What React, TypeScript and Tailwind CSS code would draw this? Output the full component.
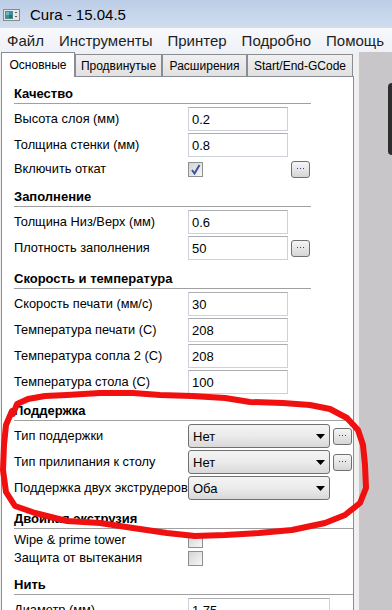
import React from "react";

function TitleBar() {
  return (
    <div className="flex h-[28px] shrink-0 items-center bg-gradient-to-b from-[#bccde6] to-[#d0ddef] pl-[3px]">
      <svg width="17" height="12" viewBox="0 0 17 12" className="mt-[1px]">
        <rect x="0.5" y="0.5" width="16" height="11" fill="#e6e6e6" stroke="#8a8a8a" />
        <rect x="2" y="2" width="8" height="8" fill="#3f8f9a" />
        <rect x="3" y="3" width="3" height="3" fill="#6cb7c9" />
        <rect x="6" y="6" width="3" height="3" fill="#2f6f5a" />
        <rect x="12" y="3" width="2" height="1" fill="#555" />
        <rect x="12" y="7" width="2" height="1" fill="#555" />
      </svg>
      <span className="ml-[10px] text-[15px] leading-none text-black">Cura - 15.04.5</span>
    </div>
  );
}

function MenuBar() {
  const items = ["Файл", "Инструменты", "Принтер", "Подробно", "Помощь"];
  return (
    <div className="flex h-[24px] shrink-0 items-center gap-[15px] whitespace-nowrap bg-gradient-to-b from-[#f7f9fc] to-[#eef1f6] pl-[7px] text-[15px] leading-none text-[#1e1e1e]">
      {items.map((m) => (
        <span key={m}>{m}</span>
      ))}
    </div>
  );
}

function Tabs() {
  const rest = [
    { t: "Продвинутые", w: "w-[87px]" },
    { t: "Расширения", w: "w-[85px]" },
    { t: "Start/End-GCode", w: "w-[106px]" },
  ];
  return (
    <div className="relative z-10 flex h-[24px] shrink-0 items-end text-[12px] leading-none text-black">
      <div className="mb-[-1px] flex h-[25px] w-[74px] items-center justify-center border-x border-t border-[#898c95] bg-white pb-[1px]">
        Основные
      </div>
      {rest.map((r) => (
        <div
          key={r.t}
          className={`flex h-[22px] ${r.w} items-center justify-center border-x border-t border-[#898c95] bg-gradient-to-b from-[#f0f0f0] to-[#e1e1e1]`}
        >
          {r.t}
        </div>
      ))}
    </div>
  );
}

function DotsButton() {
  return (
    <div className="ml-[3px] flex h-[17px] w-[19px] items-center justify-center rounded-[3px] border border-[#707070] bg-gradient-to-b from-[#f5f5f5] to-[#d6d6d6]">
      <svg width="7" height="2" viewBox="0 0 7 2">
        <rect x="0" y="0" width="1" height="1" fill="#2247a8" />
        <rect x="3" y="0" width="1" height="1" fill="#2247a8" />
        <rect x="6" y="0" width="1" height="1" fill="#2247a8" />
      </svg>
    </div>
  );
}

function CheckBox({ checked }: { checked?: boolean }) {
  return (
    <div className="flex h-[15px] w-[15px] items-center justify-center border border-[#8e8f8f] bg-gradient-to-br from-[#d4d4d4] to-[#f7f7f7]">
      {checked && (
        <svg width="11" height="11" viewBox="0 0 11 11">
          <path d="M2 6 L4.5 9.5 L9.5 1" fill="none" stroke="#3a559c" strokeWidth="2" />
        </svg>
      )}
    </div>
  );
}

function Input({ value, wide }: { value: string; wide?: boolean }) {
  return (
    <div
      className={`flex h-[24px] ${wide ? "w-[142px]" : "w-[100px]"} items-center border border-[#cdd2da] border-t-[#abadb3] bg-white pl-[3px] text-[13px] leading-none text-black`}
    >
      {value}
    </div>
  );
}

function Select({ value }: { value: string }) {
  return (
    <div className="flex h-[24px] w-[142px] items-center justify-between rounded-[3px] border border-[#707070] bg-gradient-to-b from-[#f4f4f4] via-[#ebebeb] to-[#d9d9d9] pl-[4px] pr-[4px] text-[13px] leading-none text-black">
      <span>{value}</span>
      <svg width="9" height="5" viewBox="0 0 9 5">
        <path d="M0 0 H9 L4.5 5 Z" fill="#000" />
      </svg>
    </div>
  );
}

function Row({ label, children, h = "h-[26px]" }: { label: string; children?: React.ReactNode; h?: string }) {
  return (
    <div className={`flex ${h} items-center`}>
      <div className="w-[174px] whitespace-nowrap text-[12.8px] leading-none text-black">{label}</div>
      {children}
    </div>
  );
}

function Section({
  title,
  wide,
  mt,
  children,
}: {
  title: string;
  wide?: boolean;
  mt: string;
  children: React.ReactNode;
}) {
  return (
    <div className={mt}>
      <div className="h-4 text-[13px] font-bold leading-4 text-black">{title}</div>
      <div className={`mt-px h-px bg-[#a0a0a0] ${wide ? "w-[339px]" : "w-[297px]"}`} />
      <div className="mt-[2px]">{children}</div>
    </div>
  );
}

function Panel() {
  return (
    <div className="flex-1 border-x border-t border-[#898c95] bg-white pl-[12px] pt-[9px]">
      <Section title="Качество" mt="mt-0">
        <Row label="Высота слоя (мм)">
          <Input value="0.2" />
        </Row>
        <Row label="Толщина стенки (мм)">
          <Input value="0.8" />
        </Row>
        <Row label="Включить откат" h="h-[22px]">
          <div className="w-[100px]">
            <CheckBox checked />
          </div>
          <DotsButton />
        </Row>
      </Section>
      <Section title="Заполнение" mt="mt-[9px]">
        <Row label="Толщина Низ/Верх (мм)">
          <Input value="0.6" />
        </Row>
        <Row label="Плотность заполнения">
          <Input value="50" />
          <DotsButton />
        </Row>
      </Section>
      <Section title="Скорость и температура" mt="mt-[10px]">
        <Row label="Скорость печати (мм/с)">
          <Input value="30" />
        </Row>
        <Row label="Температура печати (C)">
          <Input value="208" />
        </Row>
        <Row label="Температура сопла 2 (C)">
          <Input value="208" />
        </Row>
        <Row label="Температура стола (C)">
          <Input value="100" />
        </Row>
      </Section>
      <Section title="Поддержка" mt="mt-[8px]" wide>
        <Row label="Тип поддержки">
          <Select value="Нет" />
          <DotsButton />
        </Row>
        <Row label="Тип прилипания к столу">
          <Select value="Нет" />
          <DotsButton />
        </Row>
        <Row label="Поддержка двух экструдеров">
          <Select value="Оба" />
        </Row>
      </Section>
      <Section title="Двойная экструзия" mt="mt-[10px]" wide>
        <Row label="Wipe & prime tower" h="h-[18px]">
          <CheckBox />
        </Row>
        <Row label="Защита от вытекания" h="h-[18px]">
          <CheckBox />
        </Row>
      </Section>
      <Section title="Нить" mt="mt-[10px]" wide>
        <Row label="Диаметр (мм)">
          <Input value="1.75" wide />
        </Row>
      </Section>
    </div>
  );
}

const loop = [
  [13, 414], [17, 404], [28, 399], [45, 396], [67, 395], [100, 393], [133, 393], [160, 395],
  [192, 396], [225, 398], [250, 402], [283, 403], [310, 405], [330, 409], [347, 418], [358, 430],
  [363, 445], [365, 465], [366, 488], [360, 503], [345, 515], [325, 523], [292, 530], [259, 533],
  [225, 535], [195, 536], [167, 533], [133, 528], [100, 523], [67, 521], [35, 513], [15, 506],
  [6, 492], [3, 470], [4, 445], [6, 425], [12, 411],
]
  .map((p) => p.join(","))
  .join(" ");

export default function App() {
  return (
    <div className="relative flex h-[610px] w-[392px] flex-col overflow-hidden bg-[#f0f0f0] font-['Liberation_Sans',Arial,sans-serif]">
      <TitleBar />
      <MenuBar />
      <div className="flex shrink-0 grow">
        <div className="ml-[1px] flex w-[353px] flex-col">
          <Tabs />
          <Panel />
        </div>
        <div className="ml-[5px] flex flex-1 flex-col bg-[#c8c6c8]">
          <div className="ml-auto mt-[31px] h-[72px] w-[4px] rounded-l-[6px] bg-[#2e2e2e]" />
        </div>
      </div>
      <svg
        className="pointer-events-none absolute left-0 top-0"
        width="392"
        height="610"
        viewBox="0 0 392 610"
      >
        <polyline
          points={loop}
          fill="none"
          stroke="#f01010"
          strokeWidth="6"
          strokeLinejoin="round"
          strokeLinecap="round"
        />
      </svg>
    </div>
  );
}
